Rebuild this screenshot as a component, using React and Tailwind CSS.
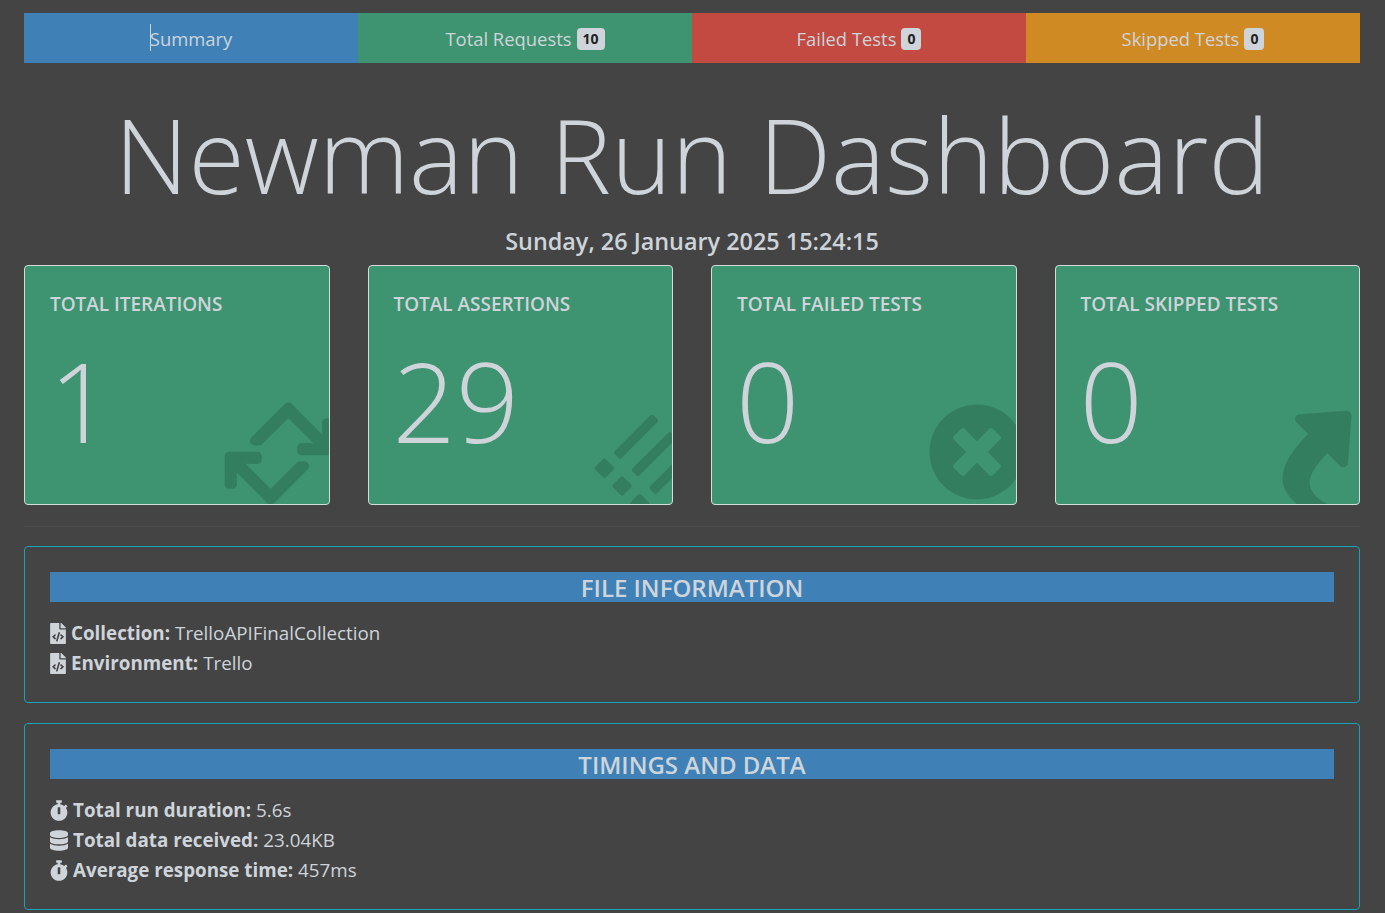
import { FaRetweet, FaList, FaTimesCircle, FaShare, FaFileCode, FaStopwatch, FaDatabase } from "react-icons/fa";

const tabs = [
  { label: "Summary", bg: "bg-[#3f81b6]" },
  { label: "Total Requests", count: 10, bg: "bg-[#3e9471]" },
  { label: "Failed Tests", count: 0, bg: "bg-[#c34a40]" },
  { label: "Skipped Tests", count: 0, bg: "bg-[#d08a24]" },
];

const cards = [
  { title: "TOTAL ITERATIONS", value: "1", icon: <FaRetweet className="absolute left-[192px] top-[125px] w-[125px] h-[125px] -rotate-45 text-black/15" /> },
  { title: "TOTAL ASSERTIONS", value: "29", icon: <FaList className="absolute left-[236px] top-[157px] w-[80px] h-[80px] -rotate-45 text-black/15" /> },
  { title: "TOTAL FAILED TESTS", value: "0", icon: <FaTimesCircle className="absolute left-[216px] top-[137px] w-[98px] h-[98px] text-black/15" /> },
  { title: "TOTAL SKIPPED TESTS", value: "0", icon: <FaShare className="absolute left-[213px] top-[138px] w-[103px] h-[103px] -rotate-45 text-black/15" /> },
];

function Badge({ children }) {
  return (
    <span className="ml-[5px] inline-block rounded-[4px] bg-[#ced4da] px-[6px] text-[14px] leading-[22px] font-bold text-[#222]">
      {children}
    </span>
  );
}

function Panel({ title, children, className }) {
  return (
    <div className={`rounded-[4px] border border-[#17a2b8] px-[25px] pt-[25px] ${className}`}>
      <div className="h-[30px] bg-[#3f81b6] text-center text-[24px] leading-[32px] font-semibold text-[#ced4da]">{title}</div>
      <div className="mt-[16px] text-[18.8px] leading-[30px] text-[#ced4da]">{children}</div>
    </div>
  );
}

function Row({ icon, label, value }) {
  return (
    <div className="flex items-center">
      {icon}
      <b className="font-bold">{label}</b>
      <span className="ml-[5px]">{value}</span>
    </div>
  );
}

export default function App() {
  return (
    <div className="relative h-[913px] overflow-hidden bg-[#444444] pl-[24px] pr-[25px] pt-[13px] font-['Open_Sans','Noto_Sans',sans-serif] text-[#ced4da]">
      {/* tabs */}
      <div className="grid grid-cols-4 h-[50px]">
        {tabs.map((t) => (
          <div key={t.label} className={`flex items-center justify-center pt-[2px] text-[18.4px] ${t.bg}`}>
            {t.label}
            {t.count !== undefined && <Badge>{t.count}</Badge>}
          </div>
        ))}
      </div>
      {/* text caret */}
      <div className="absolute left-[150px] top-[24px] h-[27px] w-px bg-[#ced4da]" />

      <h1 className="mt-[25px] text-center text-[102.4px] leading-[134px] font-light whitespace-nowrap">Newman Run Dashboard</h1>
      <div className="mt-[2px] text-center text-[23.4px] leading-[34px] font-semibold">Sunday, 26 January 2025 15:24:15</div>

      {/* cards */}
      <div className="mt-[7px] flex gap-[38px]">
        {cards.map((c) => (
          <div key={c.title} className="relative h-[240px] flex-1 overflow-hidden rounded-[4px] border border-[#d5dcdc] bg-[#3e9471] px-[25px] pt-[24px]">
            <div className="text-[18.95px] leading-[28px] font-semibold">{c.title}</div>
            {c.icon}
            <div className="mt-[14px] -ml-[1px] text-[111px] leading-[136px] font-light">{c.value}</div>
          </div>
        ))}
      </div>

      <div className="mt-[21px] mb-[19px] h-px bg-[#4c4c4c]" />

      <Panel title="FILE INFORMATION" className="h-[157px]">
        <Row icon={<FaFileCode className="mr-[5px] h-[21px] w-[16px]" />} label="Collection:" value="TrelloAPIFinalCollection" />
        <Row icon={<FaFileCode className="mr-[5px] h-[21px] w-[16px]" />} label="Environment:" value="Trello" />
      </Panel>

      <Panel title="TIMINGS AND DATA" className="mt-[20px] h-[187px]">
        <Row icon={<FaStopwatch className="mr-[5px] h-[21px] w-[18px]" />} label="Total run duration:" value="5.6s" />
        <Row icon={<FaDatabase className="mr-[5px] h-[21px] w-[18px]" />} label="Total data received:" value="23.04KB" />
        <Row icon={<FaStopwatch className="mr-[5px] h-[21px] w-[18px]" />} label="Average response time:" value="457ms" />
      </Panel>
    </div>
  );
}
